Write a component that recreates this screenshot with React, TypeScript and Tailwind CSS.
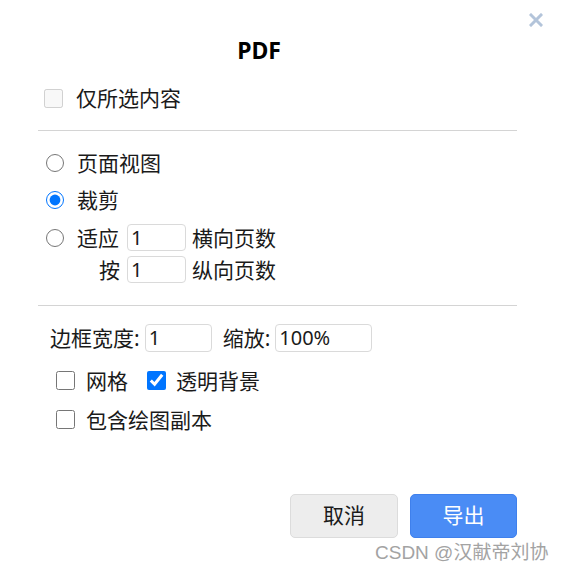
import React, { useState } from 'react';

const font = "font-['Noto_Sans','Noto_Sans_CJK_SC',sans-serif]";

function NumberBox({ value, width }: { value: string; width: string }) {
  return (
    <input
      defaultValue={value}
      className={`${width} h-[27px] border border-[#dadada] rounded-[4px] px-[3px] text-[20px] leading-[25px] text-[#1a1a1a] outline-none bg-white`}
    />
  );
}

export default function App() {
  const [mode, setMode] = useState<'page' | 'crop' | 'fit'>('crop');

  return (
    <div className={`relative w-[561px] h-[574px] bg-white text-[#1a1a1a] ${font}`}>
      {/* close */}
      <button className="absolute left-[529px] top-[13px] w-[14px] h-[14px]">
        <svg viewBox="0 0 14 14" className="w-[14px] h-[14px]">
          <path d="M2 2 L12 12 M12 2 L2 12" stroke="#b3c4da" strokeWidth="3" strokeLinecap="square" />
        </svg>
      </button>

      <div className="pt-[36px]">
        <h1 className="w-[518px] text-center text-[23px] leading-[28px] font-bold text-black">PDF</h1>
      </div>

      <label className="mt-[22px] h-[24px] flex items-center pl-[44px]">
        <input type="checkbox" disabled className="m-0 w-[19px] h-[19px]" />
        <span className="ml-[13px] text-[21px] leading-[24px]">仅所选内容</span>
      </label>

      <div className="mt-[20px] ml-[38px] w-[479px] h-px bg-[#d4d4d4]" />

      <div className="mt-[20px] flex flex-col">
        <label className="h-[24px] flex items-center pl-[46px]">
          <input type="radio" name="mode" checked={mode === 'page'} onChange={() => setMode('page')} className="m-0 w-[18px] h-[18px]" />
          <span className="ml-[13px] text-[21px] leading-[24px]">页面视图</span>
        </label>
        <label className="mt-[13px] h-[24px] flex items-center pl-[46px]">
          <input type="radio" name="mode" checked={mode === 'crop'} onChange={() => setMode('crop')} className="m-0 w-[18px] h-[18px]" />
          <span className="ml-[13px] text-[21px] leading-[24px]">裁剪</span>
        </label>
        <div className="mt-[12px] h-[27px] flex items-center pl-[46px]">
          <input type="radio" name="mode" checked={mode === 'fit'} onChange={() => setMode('fit')} className="m-0 w-[18px] h-[18px]" />
          <span className="ml-[13px] w-[50px] shrink-0 text-[21px] leading-[24px]">适应</span>
          <NumberBox value="1" width="w-[59px]" />
          <span className="ml-[6px] text-[21px] leading-[24px]">横向页数</span>
        </div>
        <div className="mt-[5px] h-[27px] flex items-center pl-[99px]">
          <span className="w-[28px] shrink-0 text-[21px] leading-[24px]">按</span>
          <NumberBox value="1" width="w-[59px]" />
          <span className="ml-[6px] text-[21px] leading-[24px]">纵向页数</span>
        </div>
      </div>

      <div className="mt-[22px] ml-[38px] w-[479px] h-px bg-[#d4d4d4]" />

      <div className="mt-[18px] h-[28px] flex items-center pl-[50px]">
        <span className="text-[21px] leading-[24px]">边框宽度:</span>
        <input defaultValue="1" className="ml-[5px] w-[67px] h-[28px] border border-[#dadada] rounded-[4px] px-[3px] text-[20px] outline-none" />
        <span className="ml-[11px] text-[21px] leading-[24px]">缩放:</span>
        <input defaultValue="100%" className="ml-[5px] w-[97px] h-[28px] border border-[#dadada] rounded-[4px] px-[3px] text-[20px] outline-none" />
      </div>

      <div className="mt-[16px] h-[25px] flex items-center pl-[56px]">
        <input type="checkbox" className="m-0 w-[19px] h-[19px]" />
        <span className="ml-[11px] text-[21px] leading-[24px]">网格</span>
        <input type="checkbox" defaultChecked className="ml-[19px] m-0 w-[19px] h-[19px]" />
        <span className="ml-[10px] text-[21px] leading-[24px]">透明背景</span>
      </div>
      <div className="mt-[14px] h-[25px] flex items-center pl-[56px]">
        <input type="checkbox" className="m-0 w-[19px] h-[19px]" />
        <span className="ml-[11px] text-[21px] leading-[24px]">包含绘图副本</span>
      </div>

      <div className="mt-[62px] ml-[38px] w-[479px] flex justify-end gap-[12px]">
        <button className="w-[108px] h-[44px] rounded-[5px] border border-[#dcdcdc] bg-[#ededed] text-[21px] text-[#1a1a1a]">取消</button>
        <button className="w-[107px] h-[44px] rounded-[5px] border border-[#3f80ec] bg-[#4a8cf5] text-[21px] text-white">导出</button>
      </div>

      <div className="absolute left-[375px] top-[541px] text-[19px] leading-[24px] text-[#a3a3a3] font-['Liberation_Sans','Noto_Sans_CJK_SC',sans-serif]">
        CSDN @汉献帝刘协
      </div>
    </div>
  );
}
